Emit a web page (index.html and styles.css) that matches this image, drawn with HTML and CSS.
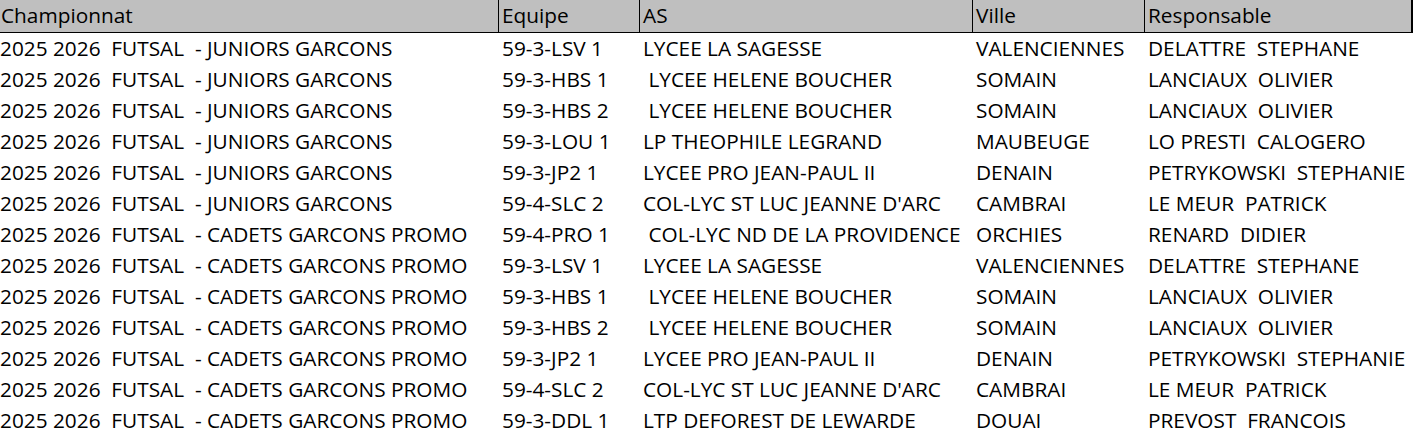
FILE: index.html
```html
<!DOCTYPE html>
<html lang="fr">
<head>
<meta charset="utf-8">
<title>Championnats</title>
<link rel="stylesheet" href="styles.css">
</head>
<body>
<div class="sheet">
  <div class="row head">
    <div class="c c1">Championnat</div>
    <div class="c c2">Equipe</div>
    <div class="c c3">AS</div>
    <div class="c c4">Ville</div>
    <div class="c c5">Responsable</div>
  </div>
  <div class="row"><div class="c c1">2025 2026  FUTSAL  - JUNIORS GARCONS</div><div class="c c2">59-3-LSV 1</div><div class="c c3">LYCEE LA SAGESSE</div><div class="c c4">VALENCIENNES</div><div class="c c5">DELATTRE  STEPHANE</div></div>
  <div class="row"><div class="c c1">2025 2026  FUTSAL  - JUNIORS GARCONS</div><div class="c c2">59-3-HBS 1</div><div class="c c3"> LYCEE HELENE BOUCHER</div><div class="c c4">SOMAIN</div><div class="c c5">LANCIAUX  OLIVIER</div></div>
  <div class="row"><div class="c c1">2025 2026  FUTSAL  - JUNIORS GARCONS</div><div class="c c2">59-3-HBS 2</div><div class="c c3"> LYCEE HELENE BOUCHER</div><div class="c c4">SOMAIN</div><div class="c c5">LANCIAUX  OLIVIER</div></div>
  <div class="row"><div class="c c1">2025 2026  FUTSAL  - JUNIORS GARCONS</div><div class="c c2">59-3-LOU 1</div><div class="c c3">LP THEOPHILE LEGRAND</div><div class="c c4">MAUBEUGE</div><div class="c c5">LO PRESTI  CALOGERO</div></div>
  <div class="row"><div class="c c1">2025 2026  FUTSAL  - JUNIORS GARCONS</div><div class="c c2">59-3-JP2 1</div><div class="c c3">LYCEE PRO JEAN-PAUL II</div><div class="c c4">DENAIN</div><div class="c c5">PETRYKOWSKI  STEPHANIE</div></div>
  <div class="row"><div class="c c1">2025 2026  FUTSAL  - JUNIORS GARCONS</div><div class="c c2">59-4-SLC 2</div><div class="c c3">COL-LYC ST LUC JEANNE D'ARC</div><div class="c c4">CAMBRAI</div><div class="c c5">LE MEUR  PATRICK</div></div>
  <div class="row"><div class="c c1">2025 2026  FUTSAL  - CADETS GARCONS PROMO</div><div class="c c2">59-4-PRO 1</div><div class="c c3"> COL-LYC ND DE LA PROVIDENCE</div><div class="c c4">ORCHIES</div><div class="c c5">RENARD  DIDIER</div></div>
  <div class="row"><div class="c c1">2025 2026  FUTSAL  - CADETS GARCONS PROMO</div><div class="c c2">59-3-LSV 1</div><div class="c c3">LYCEE LA SAGESSE</div><div class="c c4">VALENCIENNES</div><div class="c c5">DELATTRE  STEPHANE</div></div>
  <div class="row"><div class="c c1">2025 2026  FUTSAL  - CADETS GARCONS PROMO</div><div class="c c2">59-3-HBS 1</div><div class="c c3"> LYCEE HELENE BOUCHER</div><div class="c c4">SOMAIN</div><div class="c c5">LANCIAUX  OLIVIER</div></div>
  <div class="row"><div class="c c1">2025 2026  FUTSAL  - CADETS GARCONS PROMO</div><div class="c c2">59-3-HBS 2</div><div class="c c3"> LYCEE HELENE BOUCHER</div><div class="c c4">SOMAIN</div><div class="c c5">LANCIAUX  OLIVIER</div></div>
  <div class="row"><div class="c c1">2025 2026  FUTSAL  - CADETS GARCONS PROMO</div><div class="c c2">59-3-JP2 1</div><div class="c c3">LYCEE PRO JEAN-PAUL II</div><div class="c c4">DENAIN</div><div class="c c5">PETRYKOWSKI  STEPHANIE</div></div>
  <div class="row"><div class="c c1">2025 2026  FUTSAL  - CADETS GARCONS PROMO</div><div class="c c2">59-4-SLC 2</div><div class="c c3">COL-LYC ST LUC JEANNE D'ARC</div><div class="c c4">CAMBRAI</div><div class="c c5">LE MEUR  PATRICK</div></div>
  <div class="row"><div class="c c1">2025 2026  FUTSAL  - CADETS GARCONS PROMO</div><div class="c c2">59-3-DDL 1</div><div class="c c3">LTP DEFOREST DE LEWARDE</div><div class="c c4">DOUAI</div><div class="c c5">PREVOST  FRANCOIS</div></div>
</div>
</body>
</html>
```
FILE: styles.css
```css
html, body {
  margin: 0;
  padding: 0;
  background: #ffffff;
}
.sheet {
  width: 1414px;
  font-family: "Open Sans", "Noto Sans", sans-serif;
  font-size: 20.8px;
  color: #000000;
}
.row {
  display: grid;
  grid-template-columns: 499px 141px 333px 172px 268px;
  height: 31px;
}
.row.head {
  height: 33px;
}
.c {
  box-sizing: border-box;
  white-space: pre;
  overflow: hidden;
  line-height: 31px;
  padding-left: 3px;
}
.c1 {
  padding-left: 0;
}
.head .c {
  background: #bfbfbf;
  border-bottom: 1px solid #000000;
  border-right: 1px solid #000000;
  line-height: 30px;
}
.head .c1 {
  padding-left: 1px;
}
.head .c5 {
  border-right: 2px solid #000000;
}
```
